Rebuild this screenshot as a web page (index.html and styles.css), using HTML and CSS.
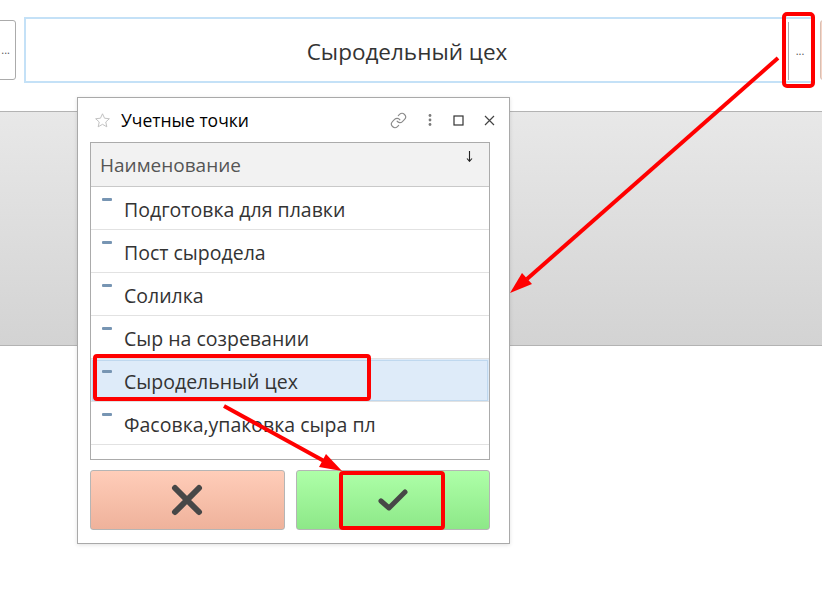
FILE: index.html
```html
<!DOCTYPE html>
<html lang="ru">
<head>
    <meta charset="UTF-8">
    <meta name="viewport" content="width=device-width, initial-scale=1.0">
    <title>Учетные точки</title>
    <link rel="stylesheet" href="styles.css">
</head>
<body>
    <div class="page">
        <div class="toolbar">
            <div class="side-btn side-left">...</div>
            <div class="field">
                <span class="field-text">Сыродельный цех</span>
                <div class="field-btn">...</div>
            </div>
            <div class="side-btn side-right"></div>
        </div>
        <div class="band"></div>
    </div>

    <!-- всплывающее окно выбора -->
    <div class="dialog">
        <div class="dialog-title">
            <svg class="star" width="17" height="17" viewBox="0 0 24 24">
                <path d="M12 2.5l2.9 6.3 6.8.7-5.1 4.6 1.5 6.8L12 17.4l-6.1 3.5 1.5-6.8-5.1-4.6 6.8-.7z" fill="none" stroke="#bdbdbd" stroke-width="1.3" stroke-linejoin="round"/>
            </svg>
            <span class="title-text">Учетные точки</span>
            <div class="title-tools">
                <svg width="17" height="17" viewBox="0 0 24 24" fill="none" stroke="#8a8a8a" stroke-width="1.6" stroke-linecap="round">
                    <path d="M10 13a5 5 0 0 0 7.54.54l3-3a5 5 0 0 0-7.07-7.07l-1.72 1.71"/>
                    <path d="M14 11a5 5 0 0 0-7.54-.54l-3 3a5 5 0 0 0 7.07 7.07l1.71-1.71"/>
                </svg>
                <svg width="6" height="14" viewBox="0 0 6 14" fill="#7a7a7a">
                    <circle cx="3" cy="2.5" r="1.4"/>
                    <circle cx="3" cy="7" r="1.4"/>
                    <circle cx="3" cy="11.5" r="1.4"/>
                </svg>
                <svg width="11" height="11" viewBox="0 0 11 11">
                    <rect x="1" y="1" width="9" height="9" fill="none" stroke="#333" stroke-width="1.2"/>
                </svg>
                <svg width="11" height="11" viewBox="0 0 11 11" stroke="#444" stroke-width="1.2">
                    <path d="M1 1l9 9M10 1l-9 9"/>
                </svg>
            </div>
        </div>

        <div class="grid">
            <div class="grid-head">
                <span>Наименование</span>
                <svg class="sort" width="7" height="11" viewBox="0 0 7 11" fill="none" stroke="#222" stroke-width="1.1">
                    <path d="M3.5 0v10M1 7.5l2.5 2.8L6 7.5"/>
                </svg>
            </div>
            <div class="row"><i class="row-icon"></i>Подготовка для плавки</div>
            <div class="row"><i class="row-icon"></i>Пост сыродела</div>
            <div class="row"><i class="row-icon"></i>Солилка</div>
            <div class="row"><i class="row-icon"></i>Сыр на созревании</div>
            <div class="row selected"><i class="row-icon"></i>Сыродельный цех</div>
            <div class="row"><i class="row-icon"></i>Фасовка,упаковка сыра пл</div>
        </div>

        <div class="actions">
            <button class="btn btn-cancel">
                <svg width="34" height="34" viewBox="0 0 34 34" stroke="#474747" stroke-width="6" stroke-linecap="round">
                    <path d="M5 5l24 24M29 5L5 29"/>
                </svg>
            </button>
            <button class="btn btn-ok">
                <svg width="34" height="28" viewBox="0 0 34 28" fill="none" stroke="#474747" stroke-width="5" stroke-linecap="round" stroke-linejoin="round">
                    <path d="M5 15l8 7L29 6"/>
                </svg>
            </button>
        </div>
    </div>

    <!-- пометки поверх скриншота -->
    <svg class="marks" width="822" height="589" viewBox="0 0 822 589">
        <g fill="none" stroke="#ff0000" stroke-width="4">
            <rect x="784" y="14" width="29" height="72" rx="3"/>
            <rect x="95" y="356" width="274" height="43" rx="2"/>
            <rect x="341" y="473" width="102" height="55" rx="2"/>
            <line x1="778" y1="58" x2="527" y2="279"/>
            <line x1="224" y1="406" x2="324" y2="461"/>
        </g>
        <g fill="#ff0000">
            <polygon points="510,293 522,273 532,284"/>
            <polygon points="342,471 319,467 326,454"/>
        </g>
    </svg>
</body>
</html>
```

FILE: styles.css
```css
body {
    margin: 0;
    width: 822px;
    height: 589px;
    overflow: hidden;
    position: relative;
    background-color: #fff;
    font-family: "Open Sans", "Noto Sans", sans-serif;
    color: #333;
}
.toolbar {
    display: flex;
    align-items: center;
    padding-top: 17px;
    height: 66px;
}
.side-btn {
    flex: none;
    height: 58px;
    border: 1px solid #ababab;
    border-radius: 3px;
    background-color: #fff;
    font-size: 11px;
    line-height: 58px;
    color: #555;
}
.side-left {
    margin-left: -11px;
    margin-right: 8px;
    width: 20px;
    padding-right: 5px;
    text-align: right;
}
.side-right {
    margin-left: 7px;
    width: 20px;
    background-color: #f6d6c8;
    border-color: #d8bfb3;
}
.field {
    flex: none;
    width: 785px;
    height: 62px;
    border: 2px solid #c4e1f7;
    display: flex;
    align-items: center;
}
.field-text {
    flex: 1;
    text-align: center;
    font-size: 22.5px;
    color: #333;
    padding-top: 2px;
}
.field-btn {
    width: 22px;
    height: 58px;
    border-left: 1px solid #a9a9a9;
    font-size: 11px;
    line-height: 58px;
    text-align: center;
    color: #555;
    margin-top: 2px;
}
.band {
    margin-top: 28px;
    height: 233px;
    border-top: 1px solid #b3b3b3;
    border-bottom: 1px solid #b3b3b3;
    background: linear-gradient(#e8e8e8, #d3d3d3);
}
.dialog {
    position: absolute;
    left: 77px;
    top: 97px;
    width: 400px;
    height: 445px;
    border: 1px solid #a9a9a9;
    background-color: #fff;
    box-shadow: 0 1px 4px rgba(0,0,0,0.12);
    padding: 0 19px 0 12px;
}
.dialog-title {
    height: 44px;
    display: flex;
    align-items: center;
}
.star {
    margin-left: 4px;
    margin-right: 10px;
}
.title-text {
    font-size: 17.5px;
    color: #000;
    flex: 1;
}
.title-tools {
    display: flex;
    align-items: center;
    gap: 20px;
    margin-right: -5px;
}
.grid {
    height: 316px;
    border: 1px solid #ababab;
    overflow: hidden;
}
.grid-head {
    height: 43px;
    border-bottom: 1px solid #c9c9c9;
    background-color: #f2f2f2;
    display: flex;
    align-items: center;
    justify-content: space-between;
    padding: 0 16px 0 9px;
    font-size: 19px;
    color: #555;
}
.sort {
    align-self: flex-start;
    margin-top: 8px;
}
.row {
    height: 40px;
    border-bottom: 1px solid #e2e2e2;
    display: flex;
    align-items: center;
    padding-left: 33px;
    padding-top: 2px;
    position: relative;
    font-size: 19.5px;
    color: #333;
}
.row-icon {
    position: absolute;
    left: 11px;
    top: 11px;
    width: 10px;
    height: 3px;
    background-color: #7795b3;
    border-radius: 1px;
}
.row.selected {
    background-color: #deebf9;
    outline: 1px solid #bfd8ef;
    outline-offset: -2px;
}
.actions {
    display: flex;
    gap: 11px;
    margin-top: 10px;
}
.btn {
    flex: 1;
    height: 60px;
    border: 1px solid #b5b5b5;
    border-radius: 3px;
    display: flex;
    align-items: center;
    justify-content: center;
    padding: 0;
}
.btn-cancel { background: linear-gradient(#ffcdb9, #efb29b); }
.btn-ok { background: linear-gradient(#aeffa8, #8de888); }
.marks {
    position: absolute;
    left: 0;
    top: 0;
    pointer-events: none;
}
```
